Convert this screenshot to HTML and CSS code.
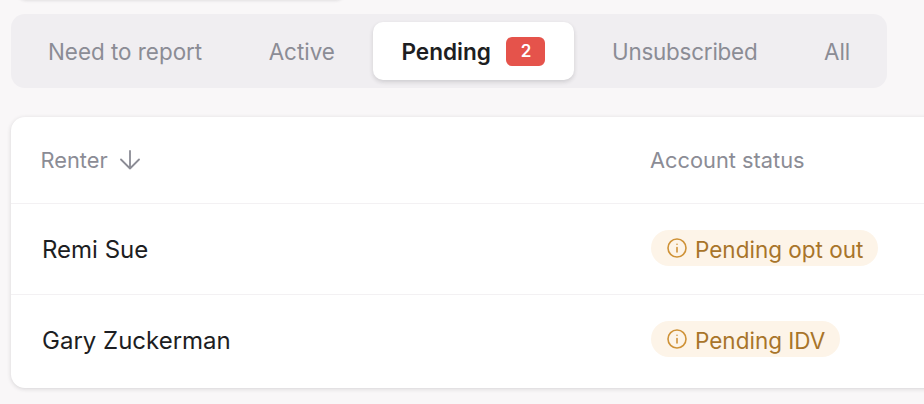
FILE: index.html
```html
<!DOCTYPE html>
<html lang="en">
<head>
<meta charset="utf-8">
<title>Renters</title>
<link rel="stylesheet" href="styles.css">
</head>
<body>
<div class="top-edge"></div>
<nav class="tabs">
  <a class="tab">Need to report</a>
  <a class="tab">Active</a>
  <a class="tab tab-active">Pending <span class="count">2</span></a>
  <a class="tab tab-tight">Unsubscribed</a>
  <a class="tab">All</a>
</nav>
<section class="card">
  <div class="row row-head">
    <div class="col-name head-name">Renter
      <svg class="sort" width="20" height="20" viewBox="0 0 20 20" fill="none" stroke="currentColor" stroke-width="1.8" stroke-linecap="round" stroke-linejoin="round"><path d="M10 1V18.5M1 9.5L10 18.5L19 9.5"/></svg>
    </div>
    <div class="col-status">Account status</div>
  </div>
  <div class="row row-body">
    <div class="col-name">Remi Sue</div>
    <div class="col-status"><span class="pill">
      <svg class="info" width="20" height="20" viewBox="0 0 20 20" fill="none" stroke="#cf9237" stroke-width="1.6" stroke-linecap="round"><circle cx="10" cy="10" r="9"/><path d="M10 9.5V14M10 6.2V6.3"/></svg>
      Pending opt out</span></div>
  </div>
  <div class="row row-body row-last">
    <div class="col-name">Gary Zuckerman</div>
    <div class="col-status"><span class="pill">
      <svg class="info" width="20" height="20" viewBox="0 0 20 20" fill="none" stroke="#cf9237" stroke-width="1.6" stroke-linecap="round"><circle cx="10" cy="10" r="9"/><path d="M10 9.5V14M10 6.2V6.3"/></svg>
      Pending IDV</span></div>
  </div>
</section>
</body>
</html>
```
FILE: styles.css
```css
* { box-sizing: border-box; }
html, body { height: 100%; }
body {
  margin: 0;
  width: 924px;
  height: 404px;
  overflow: hidden;
  position: relative;
  padding: 14px 0 0 11px;
  background: #f9f7f8;
  font-family: Inter, "Liberation Sans", sans-serif;
  font-size: 24px;
  color: #1d1e22;
}
.top-edge {
  position: absolute;
  left: 16px;
  top: -20px;
  width: 330px;
  height: 20px;
  background: #fff;
  border-radius: 10px;
  box-shadow: 0 1px 3px rgba(20, 20, 30, .1);
}
.tabs {
  width: 876px;
  height: 74px;
  display: flex;
  align-items: center;
  gap: 9.5px;
  padding: 0 0 0 8.5px;
  background: #f0eef1;
  border-radius: 14px;
  font-size: 22.4px;
}
.tab {
  display: flex;
  align-items: center;
  height: 58px;
  padding: 0 28.5px;
  color: #8b8c95;
  white-space: nowrap;
}
.tab-tight { letter-spacing: -.2px; }
.tab-active {
  gap: 15.5px;
  background: #fff;
  color: #1d1e22;
  font-size: 22.6px;
  font-weight: 600;
  border-radius: 10px;
  box-shadow: 0 2px 4px rgba(30, 30, 40, .16);
}
.count {
  width: 39px;
  height: 29px;
  display: flex;
  align-items: center;
  justify-content: center;
  background: #e5534b;
  color: #fff;
  border-radius: 6px;
  font-size: 17px;
  font-weight: 600;
}
.card {
  width: 960px;
  margin-top: 29px;
  background: #fff;
  border-radius: 14px;
  box-shadow: 0 1px 4px rgba(30, 30, 40, .16);
}
.row {
  display: flex;
  align-items: center;
  border-bottom: 1px solid #f3f1f3;
}
.row-head { height: 87px; color: #8b8c95; font-size: 21.8px; }
.row-body { height: 91px; padding-bottom: 2px; }
.row-last { height: 93px; padding-bottom: 5px; border-bottom: 0; }
.col-name { width: 639px; padding-left: 31px; }
.row-body .col-name { padding-top: 2px; }
.row-head .head-name { display: flex; align-items: center; gap: 12px; padding-left: 29.5px; }
.sort { flex: none; }
.col-status { display: flex; }
.pill {
  display: inline-flex;
  align-items: center;
  gap: 8px;
  height: 36px;
  margin-left: 1px;
  padding: 2px 15px 0 16px;
  background: #fdf4e8;
  border-radius: 18px;
  color: #a8742a;
  font-size: 22.5px;
}
.info { flex: none; margin-bottom: 2px; }
```
